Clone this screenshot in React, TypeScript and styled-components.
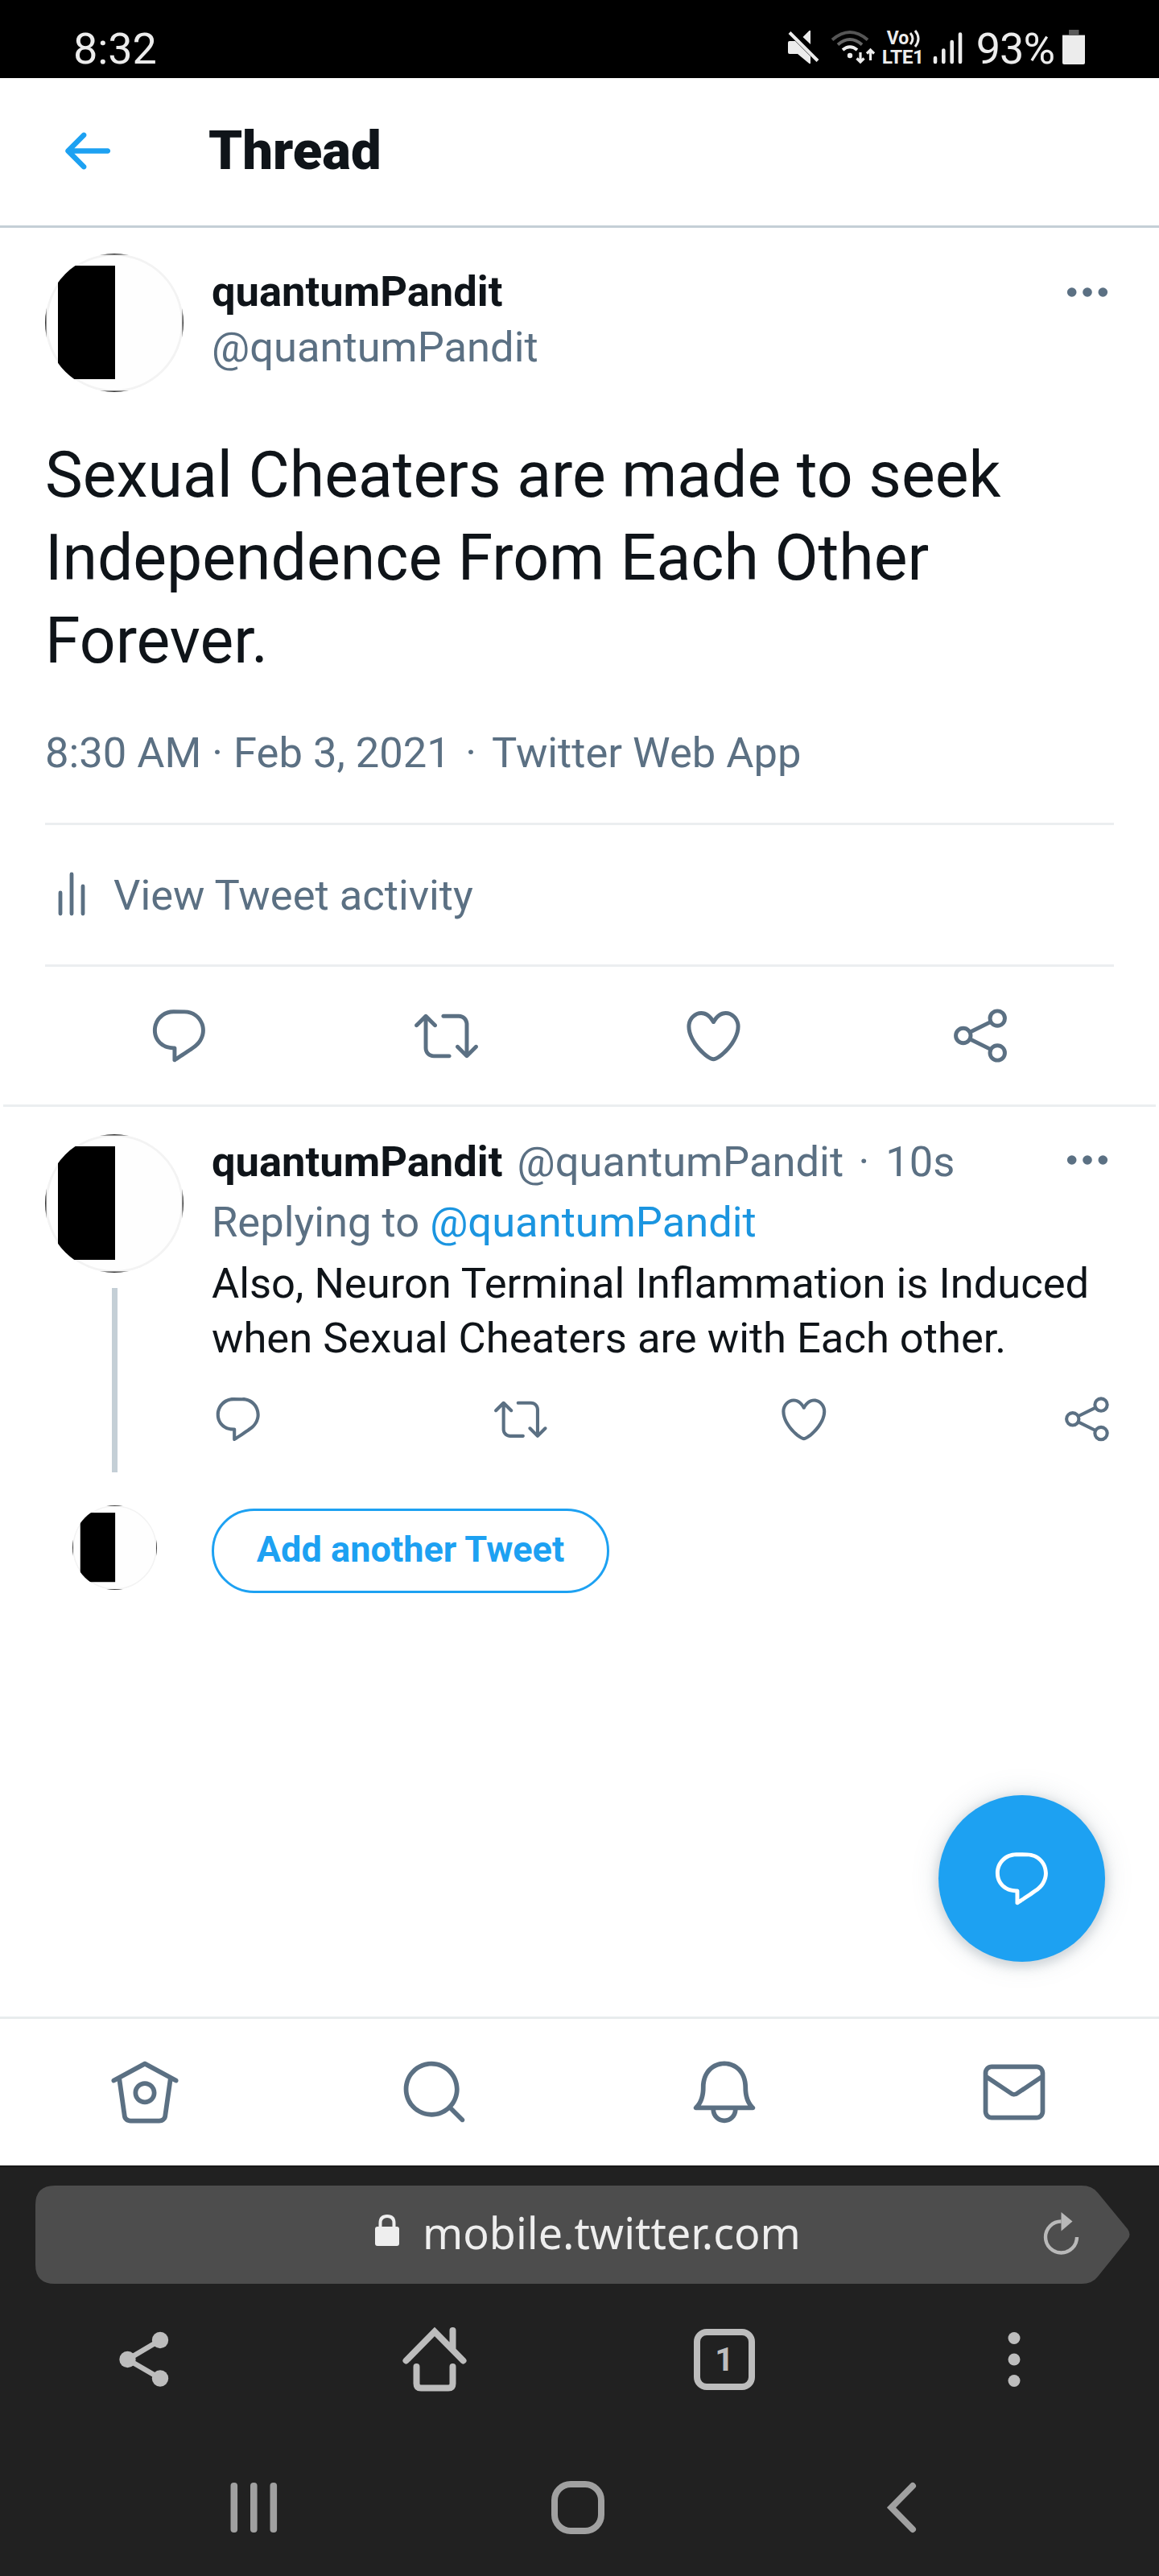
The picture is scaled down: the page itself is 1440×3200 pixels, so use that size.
import React from "react";
import styled, { createGlobalStyle } from "styled-components";

const SLATE = "#5b7083";
const INK = "#0f1419";
const BLUE = "#1da1f2";

const GlobalStyle = createGlobalStyle`
  *, *::before, *::after { box-sizing: border-box; }
  body { margin: 0; background: #fff; font-family: Roboto, "Noto Sans", sans-serif; }
  svg { display: block; flex: none; overflow: visible; }
`;

const Screen = styled.div`
  width: 1440px;
  height: 3200px;
  display: flex;
  flex-direction: column;
  overflow: hidden;
  background: #fff;
  color: ${INK};
`;

/* ---------- status bar ---------- */
const StatusBar = styled.div`
  height: 97px;
  flex: none;
  background: #000;
  color: #ececec;
  display: flex;
  justify-content: space-between;
  align-items: flex-end;
  padding: 0 92px 4px 91px;
  font-size: 54px;
  line-height: 64px;
`;
const Clock = styled.span`
  letter-spacing: -0.1px;
`;
const StatusIcons = styled.div`
  display: flex;
  align-items: flex-end;
  height: 64px;
`;
const StatusGlyph = styled.svg`
  margin: 0 0 13px 0;
`;
const Network = styled.div`
  width: 60px;
  height: 44px;
  margin: 0 2px 12px 1px;
  display: flex;
  flex-direction: column;
  font-weight: 700;
`;
const VoRow = styled.div`
  display: flex;
  align-items: center;
  height: 21px;
  padding-left: 6px;
  font-size: 23px;
  line-height: 21px;
`;
const LteRow = styled.div`
  height: 25px;
  font-size: 24.5px;
  line-height: 26px;
  letter-spacing: -0.4px;
`;
const Percent = styled.span`
  margin: 0 10px 0 17px;
  letter-spacing: -1px;
`;

/* ---------- header ---------- */
const Header = styled.header`
  height: 186px;
  flex: none;
  display: flex;
  align-items: center;
  padding: 0 68px 3px;
  border-bottom: 3px solid #c4cfd6;
`;
const Title = styled.h1`
  margin: 0 0 0 112px;
  font-size: 67px;
  line-height: 80px;
  font-weight: 900;
`;

/* ---------- tweets ---------- */
const MainTweet = styled.article`
  flex: none;
  height: 1092px;
  padding: 32px 56px 0;
  display: flex;
  flex-direction: column;
`;
const AuthorRow = styled.div`
  display: flex;
  height: 172px;
`;
const AuthorText = styled.div`
  flex: 1;
  padding: 13px 0 0 35px;
`;
const Line = styled.div`
  display: flex;
  align-items: center;
  height: 69px;
  font-size: 52.5px;
  line-height: 69px;
  white-space: pre;
`;
const Name = styled.span`
  font-weight: 700;
  color: ${INK};
`;
const Muted = styled.span<{ $left?: number }>`
  color: ${SLATE};
  margin-left: ${(p) => p.$left ?? 0}px;
`;
const Mention = styled.span`
  color: #1b95e0;
`;
const MoreBox = styled.div`
  padding-top: 13px;
`;
const TweetText = styled.p`
  margin: 52px 0 0;
  height: 310px;
  font-size: 78.75px;
  line-height: 103.1px;
`;
const MetaLine = styled(Line)`
  margin-top: 52px;
`;
const Activity = styled.div`
  margin-top: 52px;
  height: 179px;
  padding-top: 2px;
  display: flex;
  align-items: center;
  border-top: 3px solid #ebeef0;
  border-bottom: 3px solid #ebeef0;
  font-size: 52.5px;
  line-height: 69px;
  color: ${SLATE};
`;
const ActivityLabel = styled.span`
  margin-left: 7px;
`;
const Actions = styled.div`
  flex: 1;
  padding-bottom: 3px;
  display: grid;
  grid-template-columns: repeat(4, 1fr);
  justify-items: center;
  align-items: center;
  color: ${SLATE};
`;
const Divider = styled.div`
  flex: none;
  height: 3px;
  margin: -3px 4px 0;
  background: #ebeef0;
`;

const ReplyTweet = styled.article`
  flex: none;
  height: 454px;
  padding: 34px 56px 0;
  display: flex;
`;
const Rail = styled.div`
  width: 172px;
  display: flex;
  flex-direction: column;
  align-items: center;
`;
const Thread = styled.div`
  width: 7px;
  flex: 1;
  margin-top: 19px;
  background: #c4cfd6;
`;
const ReplyBody = styled.div`
  flex: 1;
  padding-left: 35px;
`;
const ReplyHead = styled.div`
  display: flex;
  justify-content: space-between;
  align-items: flex-start;
  height: 69px;
`;
const ReplyMore = styled.div`
  padding-top: 26px;
`;
const ReplyingTo = styled(Line)`
  margin-top: 6px;
`;
const ReplyText = styled.p`
  margin: 6.5px 0 0;
  font-size: 52.5px;
  line-height: 68.5px;
`;
const SmallActions = styled.div`
  display: flex;
  justify-content: space-between;
  margin: 33px 0 0 -0.5px;
  color: ${SLATE};
`;

const AddRow = styled.div`
  flex: none;
  height: 150px;
  padding: 41px 56px 0 90px;
  display: flex;
  align-items: flex-start;
`;
const AddButton = styled.button`
  margin: 4px 0 0 68px;
  width: 494px;
  height: 105px;
  padding: 0 0 3px;
  border: 3px solid ${BLUE};
  border-radius: 53px;
  background: #fff;
  color: ${BLUE};
  font: 700 45.1px/60px Roboto, sans-serif;
`;

const FabArea = styled.div`
  flex: 1;
  display: flex;
  justify-content: flex-end;
  align-items: flex-end;
  padding: 0 67px 68px 0;
`;
const Fab = styled.button`
  width: 207px;
  height: 207px;
  padding: 0;
  border: 0;
  border-radius: 50%;
  background: ${BLUE};
  color: #fff;
  display: flex;
  align-items: center;
  justify-content: center;
  box-shadow: 0 0 35px rgba(101, 119, 134, 0.2), 0 4px 12px 3px rgba(101, 119, 134, 0.22);
`;

/* ---------- bottom bars ---------- */
const TabBar = styled.nav`
  flex: none;
  height: 185px;
  border-top: 3px solid #e8eced;
  display: grid;
  grid-template-columns: repeat(4, 1fr);
  place-items: center;
  color: ${SLATE};
`;
const Browser = styled.footer`
  flex: none;
  height: 510px;
  background: #212121;
  border-top: 2px solid #191919;
  color: #bdbdbd;
`;
const UrlBar = styled.div`
  margin: 23px 0 0 44px;
  width: 1360px;
  height: 122px;
  display: flex;
  align-items: center;
  background: #4d4d4d;
  clip-path: path("M24 0H1300Q1313 0 1320 9L1357 54Q1362 61 1357 67L1320 113Q1313 122 1300 122H24Q0 122 0 98V24Q0 0 24 0Z");
  color: #eee;
`;
const LockIcon = styled.svg`
  margin: 0 0 11px 422px;
`;
const Url = styled.span`
  margin: 0 0 7px 29px;
  width: 767px;
  font: 400 53.8px/70px "Noto Sans", sans-serif;
`;
const ReloadIcon = styled.svg`
  margin-bottom: 3px;
`;
const Toolbar = styled.div`
  height: 187px;
  display: grid;
  grid-template-columns: repeat(4, 1fr);
  place-items: center;
`;
const TabCount = styled.div`
  width: 76px;
  height: 76px;
  border: 8px solid #bdbdbd;
  border-radius: 16px;
  display: flex;
  align-items: center;
  justify-content: center;
  font: 700 41px/60px Roboto, sans-serif;
`;
const SystemNav = styled.div`
  height: 182px;
  padding: 0 118px 0 114px;
  display: grid;
  grid-template-columns: repeat(3, 402.5px);
  place-items: center;
  color: #a0a0a0;
`;

/* ---------- icons ---------- */
const paths = {
  back: "M20 11H7.414l4.293-4.293c.39-.39.39-1.023 0-1.414s-1.023-.39-1.414 0l-6 6c-.39.39-.39 1.023 0 1.414l6 6c.195.195.45.293.707.293s.512-.098.707-.293c.39-.39.39-1.023 0-1.414L7.414 13H20c.553 0 1-.447 1-1s-.447-1-1-1z",
  reply: "M14.046 2.242l-4.148-.01h-.002c-4.374 0-7.8 3.427-7.8 7.802 0 4.098 3.186 7.206 7.465 7.37v3.828c0 .108.044.286.12.403.142.225.384.347.632.347.138 0 .277-.038.402-.118.264-.168 6.473-4.14 8.088-5.506 1.902-1.61 3.04-3.97 3.043-6.312v-.017c-.006-4.367-3.43-7.787-7.8-7.788zm3.787 12.972c-1.134.96-4.862 3.405-6.772 4.643V16.67c0-.414-.335-.75-.75-.75h-.396c-3.66 0-6.318-2.476-6.318-5.886 0-3.534 2.768-6.302 6.3-6.302l4.147.01h.002c3.532 0 6.3 2.766 6.302 6.296-.003 1.91-.942 3.844-2.514 5.176z",
  retweet: "M23.77 15.67c-.292-.293-.767-.293-1.06 0l-2.22 2.22V7.65c0-2.068-1.683-3.75-3.75-3.75h-5.85c-.414 0-.75.336-.75.75s.336.75.75.75h5.85c1.24 0 2.25 1.01 2.25 2.25v10.24l-2.22-2.22c-.293-.293-.768-.293-1.06 0s-.294.768 0 1.06l3.5 3.5c.145.147.337.22.53.22s.383-.072.53-.22l3.5-3.5c.294-.292.294-.767 0-1.06zm-10.66 3.28H7.26c-1.24 0-2.25-1.01-2.25-2.25V6.46l2.22 2.22c.148.147.34.22.532.22s.384-.073.53-.22c.293-.293.293-.768 0-1.06l-3.5-3.5c-.293-.294-.768-.294-1.06 0l-3.5 3.5c-.294.292-.294.767 0 1.06s.767.293 1.06 0l2.22-2.22V16.7c0 2.068 1.683 3.75 3.75 3.75h5.85c.414 0 .75-.336.75-.75s-.337-.75-.75-.75z",
  heart: "M12 21.638h-.014C9.403 21.59 1.95 14.856 1.95 8.478c0-3.064 2.525-5.754 5.403-5.754 2.29 0 3.83 1.58 4.646 2.73.814-1.148 2.354-2.73 4.645-2.73 2.88 0 5.404 2.69 5.404 5.755 0 6.376-7.454 13.11-10.037 13.157H12zM7.354 4.225c-2.08 0-3.903 1.988-3.903 4.255 0 5.74 7.034 11.596 8.55 11.658 1.518-.062 8.55-5.917 8.55-11.658 0-2.267-1.823-4.255-3.903-4.255-2.528 0-3.94 2.936-3.952 2.965-.23.562-1.156.562-1.387 0-.014-.03-1.425-2.965-3.954-2.965z",
  home: "M22.46 7.57L12.357 2.115c-.223-.12-.49-.12-.713 0L1.543 7.57c-.364.197-.5.652-.303 1.017.135.25.394.393.66.393.12 0 .243-.03.356-.09l.815-.44L4.7 19.963c.214 1.215 1.308 2.062 2.658 2.062h9.282c1.352 0 2.445-.848 2.663-2.087l1.626-11.49.818.442c.364.193.82.06 1.017-.304.196-.363.06-.818-.304-1.016zm-4.638 12.133c-.107.606-.703.822-1.18.822H7.36c-.48 0-1.075-.216-1.178-.798L4.48 7.69 12 3.628l7.522 4.06-1.7 12.015zM8.22 12.184c0 2.084 1.695 3.78 3.78 3.78s3.78-1.696 3.78-3.78-1.695-3.78-3.78-3.78-3.78 1.696-3.78 3.78zm6.06 0c0 1.258-1.022 2.28-2.28 2.28s-2.28-1.022-2.28-2.28 1.022-2.28 2.28-2.28 2.28 1.022 2.28 2.28z",
  search: "M21.53 20.47l-3.66-3.66C19.195 15.24 20 13.214 20 11c0-4.97-4.03-9-9-9s-9 4.03-9 9 4.03 9 9 9c2.215 0 4.24-.804 5.808-2.13l3.66 3.66c.147.146.34.22.53.22s.385-.073.53-.22c.295-.293.295-.767.002-1.06zM3.5 11c0-4.135 3.365-7.5 7.5-7.5s7.5 3.365 7.5 7.5-3.365 7.5-7.5 7.5-7.5-3.365-7.5-7.5z",
  bell: "M21.697 16.468c-.02-.016-2.14-1.64-2.103-6.03.02-2.532-.812-4.782-2.347-6.335C15.872 2.71 14.01 1.94 12.005 1.93h-.013c-2.004.01-3.866.78-5.242 2.174-1.534 1.553-2.368 3.802-2.346 6.334.037 4.33-2.02 5.967-2.102 6.03-.26.193-.366.53-.265.838.102.308.39.515.712.515h4.92c.102 2.31 1.997 4.16 4.33 4.16s4.226-1.85 4.327-4.16h4.922c.322 0 .61-.206.71-.514.103-.307-.003-.645-.263-.838zM12 20.478c-1.505 0-2.73-1.177-2.828-2.658h5.656c-.1 1.48-1.323 2.66-2.828 2.66zM4.38 16.32c.74-1.132 1.548-3.028 1.524-5.896-.018-2.16.644-3.982 1.913-5.267C8.91 4.05 10.397 3.437 12 3.43c1.603.008 3.087.62 4.18 1.728 1.27 1.285 1.933 3.106 1.915 5.267-.024 2.868.785 4.765 1.525 5.896H4.38z",
  mail: "M19.25 3.018H4.75C3.233 3.018 2 4.252 2 5.77v12.495c0 1.518 1.233 2.753 2.75 2.753h14.5c1.517 0 2.75-1.235 2.75-2.753V5.77c0-1.518-1.233-2.752-2.75-2.752zm-14.5 1.5h14.5c.69 0 1.25.56 1.25 1.25v.714l-8.05 5.367c-.273.18-.626.182-.9-.002L3.5 6.482v-.714c0-.69.56-1.25 1.25-1.25zm14.5 14.998H4.75c-.69 0-1.25-.56-1.25-1.25V8.24l7.24 4.83c.383.256.822.384 1.26.384.44 0 .877-.128 1.26-.383l7.24-4.83v10.022c0 .69-.56 1.25-1.25 1.25z",
};

type IconProps = { name: keyof typeof paths; size: number; color?: string };

const Icon = ({ name, size, color = "currentColor" }: IconProps) => (
  <svg width={size} height={size} viewBox="0 0 24 24" fill={color}>
    <path d={paths[name]} />
  </svg>
);

const ShareIcon = ({ size }: { size: number }) => (
  <svg width={size} height={size} viewBox="0 0 24 24" fill="none" stroke="currentColor" strokeWidth={1.5}>
    <circle cx="5.4" cy="12" r="2.8" />
    <circle cx="18.3" cy="5.5" r="2.8" />
    <circle cx="18.3" cy="18.5" r="2.8" />
    <path d="M7.900 10.700L15.800 6.800M7.900 13.300L15.800 17.200" />
  </svg>
);

const ActivityIcon = () => (
  <svg width="78" height="79" viewBox="0 0 78 79" fill="none" stroke="currentColor" strokeWidth="4.8" strokeLinecap="round">
    <path d="M19 36V62M33 13V62M47 28V62" />
  </svg>
);

const More = () => (
  <svg width="58" height="12" viewBox="0 0 58 12" fill={SLATE}>
    <circle cx="5.7" cy="6" r="5.8" />
    <circle cx="25" cy="6" r="5.8" />
    <circle cx="44.3" cy="6" r="5.8" />
  </svg>
);

const Avatar = ({ size }: { size: number }) => (
  <svg width={size} height={size} viewBox="0 0 172 172">
    <defs>
      <clipPath id={`disc${size}`}>
        <circle cx="86" cy="86" r="86" />
      </clipPath>
    </defs>
    <g clipPath={`url(#disc${size})`}>
      <rect width="172" height="172" fill="#fefefe" />
      <circle cx="86" cy="86" r="84.5" fill="none" stroke="#f3f3f3" strokeWidth="3" />
      <rect x="16" y="15" width="71" height="141" fill="#000" />
      <rect x=".7" y=".7" width="170.6" height="170.6" fill="none" stroke="#333" strokeWidth="1.6" />
    </g>
  </svg>
);

const MuteIcon = () => (
  <StatusGlyph width="54" height="42" viewBox="0 0 54 42">
    <path d="M0 15Q0 13 2 13H9L28 32V41H26.500L12 29H2Q0 29 0 27ZM18.500 8L26.500 0H28V17Z" fill="#ececec" />
    <path d="M5 1L40 36" stroke="#000" strokeWidth="3" />
    <path d="M2 2.500L37 37.500" stroke="#ececec" strokeWidth="4" />
  </StatusGlyph>
);

const WifiIcon = () => (
  <StatusGlyph width="62" height="42" viewBox="0 0 62 42" fill="none" strokeWidth="4">
    <path d="M1 11.500Q23 -7.500 45 11.500" stroke="#555" />
    <path d="M8 17.500Q23 4.500 38 17.500" stroke="#666" />
    <path d="M14 24Q23 16.500 32 24" stroke="#ececec" />
    <circle cx="23" cy="31" r="3.2" fill="#ececec" />
    <path d="M36 27V38M31.500 34.500L36 39L40.500 34.500M48.500 37V25M44 28.500L48.500 24L53 28.500" stroke="#ececec" strokeWidth="3.2" />
  </StatusGlyph>
);

export default function App() {
  return (
    <>
      <GlobalStyle />
      <Screen>
        <StatusBar>
          <Clock>8:32</Clock>
          <StatusIcons>
            <MuteIcon />
            <WifiIcon />
            <Network>
              <VoRow>
                Vo
                <svg width="14" height="22" viewBox="0 0 14 22" fill="none" stroke="#ececec" strokeWidth="3">
                  <path d="M2 4Q8 11 2 18M8 1Q16 11 8 21" />
                </svg>
              </VoRow>
              <LteRow>LTE1</LteRow>
            </Network>
            <StatusGlyph width="38" height="42" viewBox="0 0 38 42" stroke="#ececec" strokeWidth="4.6" strokeLinecap="round">
              <path d="M4 34V39M14.300 24.500V39M24.700 14V39M35 4.500V39" />
            </StatusGlyph>
            <Percent>93%</Percent>
            <StatusGlyph width="28" height="43" viewBox="0 0 28 43">
              <path d="M8 0H20.500V6H28V8H0V6H8Z" fill="#5a5a5a" />
              <path d="M0 7H28V41Q28 43 26 43H2Q0 43 0 41Z" fill="#ececec" />
            </StatusGlyph>
          </StatusIcons>
        </StatusBar>

        <Header>
          <Icon name="back" size={79} color={BLUE} />
          <Title>Thread</Title>
        </Header>

        <MainTweet>
          <AuthorRow>
            <Avatar size={172} />
            <AuthorText>
              <Line><Name>quantumPandit</Name></Line>
              <Line><Muted>@quantumPandit</Muted></Line>
            </AuthorText>
            <MoreBox><Line><More /></Line></MoreBox>
          </AuthorRow>
          <TweetText>Sexual Cheaters are made to seek Independence From Each Other Forever.</TweetText>
          <MetaLine>
            <Muted>8:30 AM · Feb 3, 2021</Muted>
            <Muted $left={18.5}>·</Muted>
            <Muted $left={19}>Twitter Web App</Muted>
          </MetaLine>
          <Activity>
            <ActivityIcon />
            <ActivityLabel>View Tweet activity</ActivityLabel>
          </Activity>
          <Actions>
            <Icon name="reply" size={79} />
            <Icon name="retweet" size={79} />
            <Icon name="heart" size={79} />
            <ShareIcon size={79} />
          </Actions>
        </MainTweet>
        <Divider />

        <ReplyTweet>
          <Rail>
            <Avatar size={172} />
            <Thread />
          </Rail>
          <ReplyBody>
            <ReplyHead>
              <Line>
                <Name>quantumPandit</Name>
                <Muted $left={18}>@quantumPandit</Muted>
                <Muted $left={18.5}>·</Muted>
                <Muted $left={20}>10s</Muted>
              </Line>
              <ReplyMore><More /></ReplyMore>
            </ReplyHead>
            <ReplyingTo>
              <Muted>Replying to </Muted>
              <Mention>@quantumPandit</Mention>
            </ReplyingTo>
            <ReplyText>Also, Neuron Terminal Inflammation is Induced when Sexual Cheaters are with Each other.</ReplyText>
            <SmallActions>
              <Icon name="reply" size={65.6} />
              <Icon name="retweet" size={65.6} />
              <Icon name="heart" size={65.6} />
              <ShareIcon size={65.6} />
            </SmallActions>
          </ReplyBody>
        </ReplyTweet>

        <AddRow>
          <Avatar size={105} />
          <AddButton>Add another Tweet</AddButton>
        </AddRow>

        <FabArea>
          <Fab><Icon name="reply" size={79} /></Fab>
        </FabArea>

        <TabBar>
          <Icon name="home" size={92} />
          <Icon name="search" size={92} />
          <Icon name="bell" size={92} />
          <Icon name="mail" size={92} />
        </TabBar>

        <Browser>
          <UrlBar>
            <LockIcon width="30" height="40" viewBox="0 0 30 40">
              <path d="M3 15H27Q30 15 30 18V36Q30 39 27 39H3Q0 39 0 36V18Q0 15 3 15Z" fill="#eee" />
              <path d="M6.500 16V10.500Q6.500 2 15 2T23.500 10.500V16" fill="none" stroke="#eee" strokeWidth="4" />
            </LockIcon>
            <Url>mobile.twitter.com</Url>
            <ReloadIcon width="52" height="54" viewBox="0 0 52 54">
              <path d="M46 31A19.500 19.500 0 1 1 26.500 11.500" fill="none" stroke="#b9b9b9" strokeWidth="4.4" />
              <path d="M26.500 0L40.500 11.500L26.500 23.500Z" fill="#b9b9b9" />
            </ReloadIcon>
          </UrlBar>
          <Toolbar>
            <svg width="64" height="70" viewBox="0 0 64 70" fill="currentColor">
              <path d="M51 11L10.500 35L51 58.500" fill="none" stroke="currentColor" strokeWidth="6.5" />
              <circle cx="10.5" cy="35" r="10.2" />
              <circle cx="51" cy="11" r="10.2" />
              <circle cx="51" cy="58.5" r="10.2" />
            </svg>
            <svg width="80" height="80" viewBox="0 0 80 80" fill="none" stroke="currentColor" strokeWidth="8" strokeLinecap="round">
              <path d="M4.500 41.500L40 5.500L75.500 41.500M62.500 4V28M17.500 49V70Q17.500 75.500 23 75.500H57Q62.500 75.500 62.500 70V49" />
            </svg>
            <TabCount>1</TabCount>
            <svg width="16" height="70" viewBox="0 0 16 70" fill="currentColor">
              <circle cx="8" cy="8.5" r="7.5" />
              <circle cx="8" cy="35" r="7.5" />
              <circle cx="8" cy="61.5" r="7.5" />
            </svg>
          </Toolbar>
          <SystemNav>
            <svg width="58" height="62" viewBox="0 0 58 62" fill="currentColor">
              <rect x="0.500" width="8.6" height="62" rx="4" />
              <rect x="25" width="8.6" height="62" rx="4" />
              <rect x="49.500" width="8.6" height="62" rx="4" />
            </svg>
            <svg width="66" height="66" viewBox="0 0 66 66" fill="none" stroke="currentColor" strokeWidth="8">
              <rect x="4" y="4" width="58" height="58" rx="20" />
            </svg>
            <svg width="36" height="62" viewBox="0 0 36 62" fill="none" stroke="currentColor" strokeWidth="8" strokeLinecap="round">
              <path d="M32 4L5.500 31L32 58" />
            </svg>
          </SystemNav>
        </Browser>
      </Screen>
    </>
  );
}
